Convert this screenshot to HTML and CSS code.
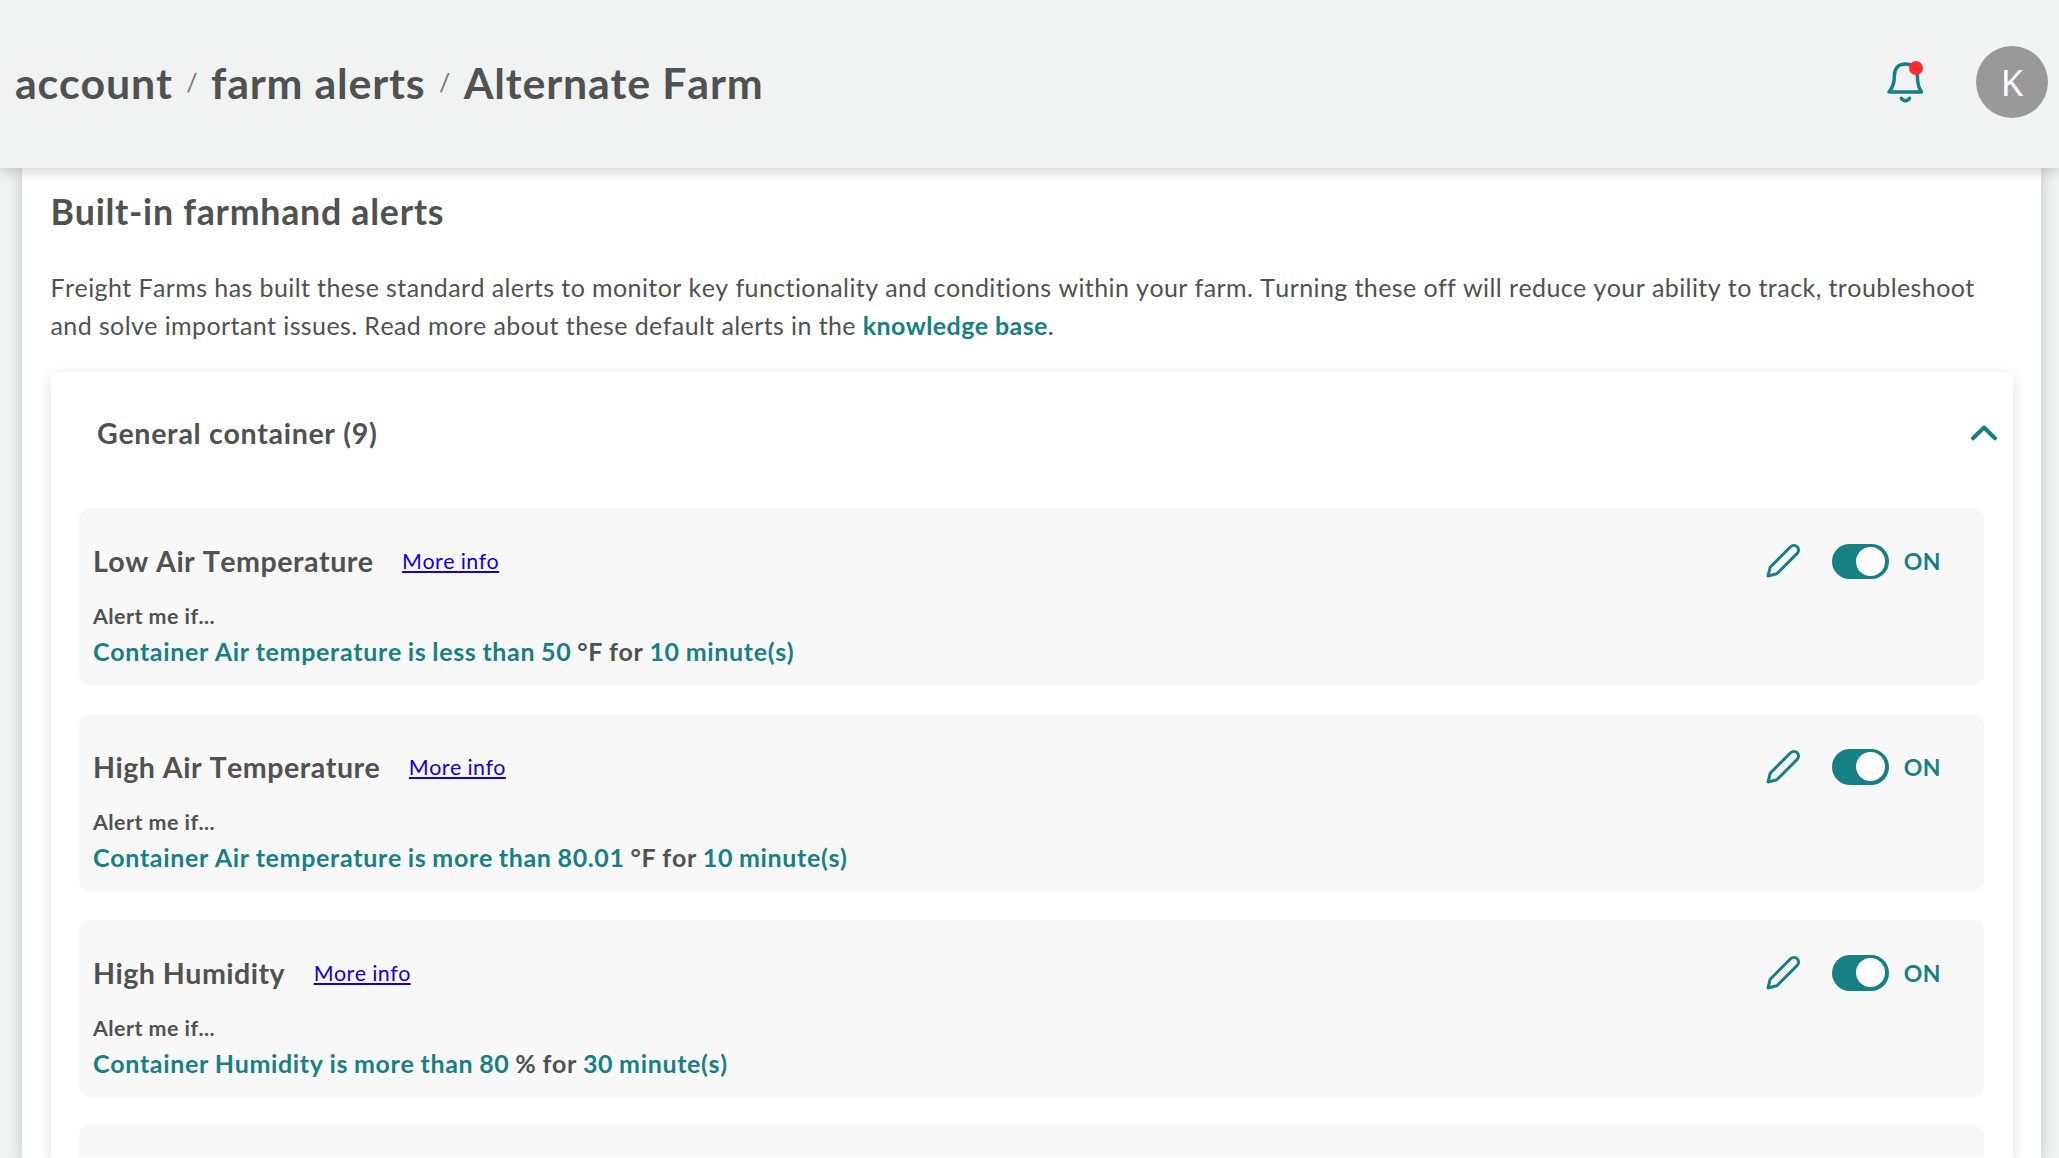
FILE: index.html
```html
<!DOCTYPE html>
<html lang="en">
<head>
    <meta charset="UTF-8">
    <meta name="viewport" content="width=device-width, initial-scale=1.0">
    <title>Farm Alerts</title>
    <link rel="stylesheet" href="styles.css">
</head>
<body>

    <svg class="sprite" xmlns="http://www.w3.org/2000/svg">
        <symbol id="pencil" viewBox="0 0 36 36">
            <path d="M3 33 L5.2 24.2 L25.6 3.8 A4 4 0 0 1 32.2 10.4 L11.8 30.8 Z"/>
        </symbol>
    </svg>

    <header class="header">
        <nav class="breadcrumbs">
            <a href="#">account</a>
            <span class="slash">/</span>
            <a href="#">farm alerts</a>
            <span class="slash">/</span>
            <span>Alternate Farm</span>
        </nav>
        <div class="header-right">
            <div class="bell">
                <svg width="40" height="44" viewBox="0 0 40 44">
                    <path d="M3 32 H35.5 C32.6 28 31.4 23 31.4 16 C31.4 8.5 27 4 19.4 4 C12.2 4 8.4 8.5 8.4 15.5 C8.4 23.5 6.5 28 3 32 Z"/>
                    <path d="M15.4 38.3 C17.3 41.4 21.6 41.4 23.5 38.3"/>
                </svg>
                <span class="bell-dot"></span>
            </div>
            <div class="avatar">K</div>
        </div>
    </header>

    <div class="page">
        <h2>Built-in farmhand alerts</h2>
        <p class="intro">Freight Farms has built these standard alerts to monitor key functionality and conditions within your farm. Turning these off will reduce your ability to track, troubleshoot and solve important issues. Read more about these default alerts in the <a href="#">knowledge base</a>.</p>

        <div class="group">
            <div class="group-header">
                <h3>General container (9)</h3>
                <svg class="chevron" width="28" height="18" viewBox="0 0 28 18"><path d="M3 14.3 L14 3.5 L25 14.3"/></svg>
            </div>

            <!-- Alert cards -->
            <div class="alert">
                <div class="alert-top">
                    <h4>Low Air Temperature</h4>
                    <a class="more" href="#">More info</a>
                    <div class="controls">
                        <svg class="pencil"><use href="#pencil"/></svg>
                        <span class="toggle"></span>
                        <span class="state">ON</span>
                    </div>
                </div>
                <div class="label">Alert me if...</div>
                <div class="rule"><b>Container Air temperature is less than 50</b> °F for <b>10 minute(s)</b></div>
            </div>

            <div class="alert">
                <div class="alert-top">
                    <h4>High Air Temperature</h4>
                    <a class="more" href="#">More info</a>
                    <div class="controls">
                        <svg class="pencil"><use href="#pencil"/></svg>
                        <span class="toggle"></span>
                        <span class="state">ON</span>
                    </div>
                </div>
                <div class="label">Alert me if...</div>
                <div class="rule"><b>Container Air temperature is more than 80.01</b> °F for <b>10 minute(s)</b></div>
            </div>

            <div class="alert">
                <div class="alert-top">
                    <h4>High Humidity</h4>
                    <a class="more" href="#">More info</a>
                    <div class="controls">
                        <svg class="pencil"><use href="#pencil"/></svg>
                        <span class="toggle"></span>
                        <span class="state">ON</span>
                    </div>
                </div>
                <div class="label">Alert me if...</div>
                <div class="rule"><b>Container Humidity is more than 80</b> % for <b>30 minute(s)</b></div>
            </div>

            <div class="alert alert-last"></div>
        </div>
    </div>

</body>
</html>
```
FILE: styles.css
```css
* {
    box-sizing: border-box;
}
body {
    margin: 0;
    height: 100vh;
    overflow: hidden;
    display: flex;
    flex-direction: column;
    background-color: #f0f3f2;
    color: #505151;
    font-family: Lato, sans-serif;
    font-kerning: none;
    letter-spacing: 0.45px;
}
h2, h3, h4, p {
    margin: 0;
}
.sprite {
    display: none;
}
svg {
    fill: none;
    stroke: #178085;
    stroke-width: 3;
    stroke-linecap: round;
    stroke-linejoin: round;
}

/* Header */
.header {
    position: relative;
    z-index: 2;
    flex: none;
    height: 168px;
    padding: 0 11px 4px 15px;
    display: flex;
    align-items: center;
    justify-content: space-between;
    background-color: #f0f3f2;
    box-shadow: 0 3px 12px rgba(0, 0, 0, 0.2);
}
.breadcrumbs {
    display: flex;
    align-items: center;
    gap: 13.5px;
    font-size: 42.9px;
    font-weight: 700;
    letter-spacing: 0.8px;
}
.breadcrumbs a {
    color: inherit;
    text-decoration: none;
}
.slash {
    font-size: 25px;
    font-weight: 400;
    letter-spacing: 0;
    color: #777;
}
.header-right {
    display: flex;
    align-items: center;
    gap: 50px;
}
.bell {
    position: relative;
    width: 40px;
    height: 44px;
}
.bell svg {
    stroke-width: 3.5;
}
.bell-dot {
    position: absolute;
    left: 23px;
    top: 1px;
    width: 14px;
    height: 14px;
    border-radius: 50%;
    background-color: #ff2c2f;
}
.avatar {
    width: 72px;
    height: 72px;
    border-radius: 50%;
    background-color: #999;
    color: #fff;
    font-family: "Noto Sans", sans-serif;
    font-size: 36px;
    line-height: 74px;
    text-align: center;
}

/* Content */
.page {
    flex: 1;
    min-height: 0;
    display: flex;
    flex-direction: column;
    margin: 0 18px 0 22px;
    padding: 18px 28.5px 0;
    background-color: #fff;
    box-shadow: 0 2px 14px rgba(0, 0, 0, 0.2);
}
h2 {
    font-size: 35.75px;
    line-height: 51px;
    font-weight: 700;
    letter-spacing: 0.72px;
}
.intro {
    margin-top: 32px;
    font-size: 25px;
    line-height: 37.5px;
    letter-spacing: 0.4px;
}
.intro a {
    color: #178085;
    font-weight: 700;
    text-decoration: none;
}
.group {
    flex: 1;
    min-height: 0;
    margin-top: 28px;
    padding: 0 28.5px;
    border-radius: 7px 7px 0 0;
    box-shadow: 0 4px 13px rgba(0, 0, 0, 0.14);
}
.group-header {
    height: 136px;
    padding: 0 0 14px 18px;
    margin-right: -14px;
    display: flex;
    align-items: center;
    justify-content: space-between;
}
h3, h4 {
    font-size: 28.6px;
    font-weight: 700;
}
h3 {
    letter-spacing: 0.66px;
    padding-bottom: 1px;
}
h4 {
    letter-spacing: 0.47px;
}
.chevron {
    stroke-width: 4;
}
.alert {
    height: 177px;
    margin-bottom: 28.8px;
    padding: 32px 43px 0 14px;
    border-radius: 11px;
    background-color: #f8f8f8;
}
.alert-last {
    height: 32px;
    margin-bottom: 0;
    padding: 0;
    border-radius: 11px 11px 0 0;
}
.alert-top {
    display: flex;
    align-items: center;
    height: 42.5px;
}
.more {
    margin-left: 28.5px;
    font-size: 21.45px;
    letter-spacing: 0.4px;
    color: #1100e0;
}
.controls {
    margin-left: auto;
    display: flex;
    align-items: center;
}
.pencil {
    width: 36px;
    height: 36px;
}
.toggle {
    width: 57.5px;
    height: 35.5px;
    margin: 0 14.5px 0 31px;
    padding: 3px 4px;
    border-radius: 18px;
    background-color: #178085;
}
.toggle::after {
    content: "";
    display: block;
    width: 29px;
    height: 29px;
    margin-left: auto;
    border-radius: 50%;
    background-color: #fff;
}
.state {
    font-size: 23px;
    font-weight: 700;
    color: #178085;
}
.label {
    margin-top: 17.5px;
    font-size: 21.45px;
    line-height: 32px;
    font-weight: 700;
}
.rule {
    font-size: 25px;
    line-height: 38px;
    font-weight: 700;
    letter-spacing: 0.64px;
    word-spacing: -0.8px;
}
.rule b {
    font-weight: 700;
    color: #178085;
}
```
